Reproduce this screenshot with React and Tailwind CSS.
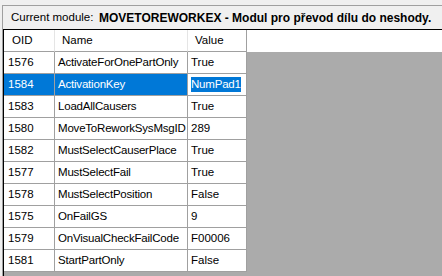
const rows = [
  { oid: "1576", name: "ActivateForOnePartOnly", value: "True" },
  { oid: "1584", name: "ActivationKey", value: "NumPad1", selected: true },
  { oid: "1583", name: "LoadAllCausers", value: "True" },
  { oid: "1580", name: "MoveToReworkSysMsgID", value: "289" },
  { oid: "1582", name: "MustSelectCauserPlace", value: "True" },
  { oid: "1577", name: "MustSelectFail", value: "True" },
  { oid: "1578", name: "MustSelectPosition", value: "False" },
  { oid: "1575", name: "OnFailGS", value: "9" },
  { oid: "1579", name: "OnVisualCheckFailCode", value: "F00006" },
  { oid: "1581", name: "StartPartOnly", value: "False" },
];

const cols = "grid grid-cols-[51px_133px_59px]";

function HeaderRow() {
  return (
    <div className={`${cols} h-[22px] bg-white`}>
      <div className="flex items-center border-r border-b border-[#e5e5e5] border-b-[#a0a0a0] pl-[8px]">OID</div>
      <div className="flex items-center border-r border-b border-[#e5e5e5] border-b-[#a0a0a0] pl-[7px]">Name</div>
      <div className="flex items-center border-r border-b border-[#a0a0a0] pl-[7px]">Value</div>
    </div>
  );
}

function Row({ oid, name, value, selected }) {
  const cell = "flex items-center border-r border-b border-[#a0a0a0] whitespace-nowrap overflow-hidden";
  return (
    <div className={`${cols} h-[22px]`}>
      <div className={`${cell} pl-[4px] ${selected ? "bg-[#0078d7] text-white" : "bg-white"}`}>{oid}</div>
      <div className={`${cell} pl-[3px] tracking-[-0.2px] ${selected ? "bg-[#0078d7] text-white" : "bg-white"}`}>{name}</div>
      <div className={`${cell} bg-white pl-[3px]`}>
        {selected ? (
          <span className="bg-[#0078d7] leading-[15px] tracking-[-0.2px] text-white">{value}</span>
        ) : (
          value
        )}
      </div>
    </div>
  );
}

export default function App() {
  return (
    <div
      className="h-[276px] w-[442px] overflow-hidden bg-[#f0f0f0] pt-[5px] text-[11.5px] text-black"
      style={{ fontFamily: '"Liberation Sans", Arial, sans-serif' }}
    >
      <div className="ml-[2px] flex h-[271px] flex-col border-t border-l border-[#a0a0a0]">
        <div className="flex h-[23px] items-center whitespace-nowrap pl-[8px]">
          <span className="w-[88px]">Current module:</span>
          <span className="text-[12px] font-bold">MOVETOREWORKEX - Modul pro převod dílu do neshody.</span>
        </div>
        <div className="h-[1px] bg-black" />
        <div className="flex-1 border-l border-black bg-[#ababab]">
          <HeaderRow />
          {rows.map((r) => (
            <Row key={r.oid} {...r} />
          ))}
        </div>
      </div>
    </div>
  );
}
